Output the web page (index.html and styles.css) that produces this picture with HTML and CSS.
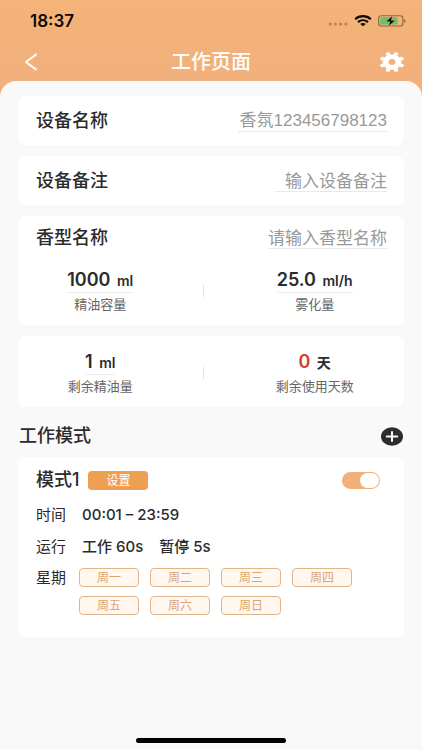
FILE: index.html
```html
<!DOCTYPE html>
<html lang="zh-CN">
<head>
<meta charset="utf-8">
<meta name="viewport" content="width=device-width, initial-scale=1">
<title>工作页面</title>
<link rel="stylesheet" href="styles.css">
</head>
<body>
<div class="app">
  <header class="header">
    <div class="status">
      <span class="clock">18:37</span>
      <div class="status-icons">
        <svg class="dots" viewBox="0 0 20 4" aria-hidden="true"><circle cx="2.2" cy="2" r="1.6"/><circle cx="7.4" cy="2" r="1.6"/><circle cx="12.6" cy="2" r="1.6"/><circle cx="17.8" cy="2" r="1.6"/></svg>
        <svg class="wifi" viewBox="0 0 18 12" aria-hidden="true"><path d="M1.2 4.2C5.600 0.200 12.400 0.200 16.800 4.200M4 7.100C6.900 4.600 11.100 4.600 14 7.100" fill="none" stroke="#0b0805" stroke-width="2.200"/><path d="M9 11.200L6.200 8.900C7.800 7.600 10.200 7.600 11.800 8.900Z" fill="#0b0805"/></svg>
        <svg class="battery" viewBox="0 0 28 12" aria-hidden="true"><rect x="0.600" y="0.800" width="24.300" height="10.200" rx="2.800" fill="none" stroke="#8e6442" stroke-width="1.100"/><rect x="2.200" y="2.300" width="17.500" height="7.200" rx="1.500" fill="#64c466"/><path d="M26 4.200C28 4.600 28 7.200 26 7.600Z" fill="#8e6442"/><path d="M14.600 0.500L7.800 6.700H11.800L10.300 11.600L17.400 5.200H13.300Z" fill="#0b0805" stroke="#f3b27a" stroke-width="0.500"/></svg>
      </div>
    </div>
    <nav class="nav">
      <button class="icon-button" type="button" aria-label="返回">
        <svg class="back" viewBox="0 0 13 18" aria-hidden="true"><path d="M11.500 1.500L1.500 9L11.500 16.500" fill="none" stroke="#fff" stroke-width="2" stroke-linecap="round" stroke-linejoin="round"/></svg>
      </button>
      <h1 class="title">工作页面</h1>
      <button class="icon-button" type="button" aria-label="设置">
        <svg class="gear" viewBox="-10 -10 20 20" preserveAspectRatio="none" aria-hidden="true"><circle r="5.300" fill="none" stroke="#fff" stroke-width="4.800"/><g fill="#fff"><circle cx="3.300" cy="7.900" r="1.900"/><circle cx="-3.300" cy="7.900" r="1.900"/><circle cx="3.300" cy="-7.900" r="1.900"/><circle cx="-3.300" cy="-7.900" r="1.900"/><circle cx="7.900" cy="3.300" r="1.900"/><circle cx="-7.900" cy="3.300" r="1.900"/><circle cx="7.900" cy="-3.300" r="1.900"/><circle cx="-7.900" cy="-3.300" r="1.900"/></g></svg>
      </button>
    </nav>
  </header>

  <main class="sheet">
    <section class="card">
      <div class="field">
        <label for="device-name">设备名称</label>
        <input id="device-name" class="wide" type="text" value="香氛123456798123">
      </div>
    </section>

    <section class="card">
      <div class="field">
        <label for="device-note">设备备注</label>
        <input id="device-note" type="text" placeholder="输入设备备注">
      </div>
    </section>

    <section class="card">
      <div class="field compact">
        <label for="scent-name">香型名称</label>
        <input id="scent-name" class="medium" type="text" placeholder="请输入香型名称">
      </div>
      <div class="metrics">
        <div class="metric">
          <p class="amount lined">1000 <span class="unit">ml</span></p>
          <p class="caption">精油容量</p>
        </div>
        <span class="divider"></span>
        <div class="metric">
          <p class="amount lined">25.0 <span class="unit">ml/h</span></p>
          <p class="caption">雾化量</p>
        </div>
      </div>
    </section>

    <section class="card">
      <div class="metrics alone">
        <div class="metric">
          <p class="amount lined">1 <span class="unit">ml</span></p>
          <p class="caption">剩余精油量</p>
        </div>
        <span class="divider"></span>
        <div class="metric">
          <p class="amount"><span class="alert">0</span> <span class="unit">天</span></p>
          <p class="caption">剩余使用天数</p>
        </div>
      </div>
    </section>

    <div class="section-head">
      <h2>工作模式</h2>
      <button class="icon-button" type="button" aria-label="添加模式">
        <svg class="plus" viewBox="0 0 22 19" aria-hidden="true"><ellipse cx="11" cy="9.500" rx="11" ry="9.300" fill="#2d2d2f"/><path d="M11 5V14M5.800 9.500H16.200" stroke="#fff" stroke-width="2" stroke-linecap="round"/></svg>
      </button>
    </div>

    <section class="card mode">
      <div class="mode-head">
        <h3>模式1</h3>
        <button class="edit" type="button">设置</button>
        <input class="toggle" type="checkbox" role="switch" aria-label="启用模式1" checked>
      </div>
      <div class="row">
        <span class="row-label">时间</span>
        <span class="row-value">00:01 – 23:59</span>
      </div>
      <div class="row">
        <span class="row-label">运行</span>
        <span class="row-value">工作 60s</span>
        <span class="row-value">暂停 5s</span>
      </div>
      <div class="row days-row">
        <span class="row-label">星期</span>
        <div class="days">
          <button type="button">周一</button>
          <button type="button">周二</button>
          <button type="button">周三</button>
          <button type="button">周四</button>
          <button type="button">周五</button>
          <button type="button">周六</button>
          <button type="button">周日</button>
        </div>
      </div>
    </section>
  </main>

  <div class="home-bar"></div>
</div>
</body>
</html>
```
FILE: styles.css
```css
* {
  box-sizing: border-box;
}

body {
  margin: 0;
  background: #f8f8f8;
  color: #2b2b2b;
  font-family: Inter, "Noto Sans CJK SC", sans-serif;
}

h1, h2, h3, p {
  margin: 0;
}

button, input {
  font-family: inherit;
  color: inherit;
}

button {
  padding: 0;
  border: 0;
  background: none;
  cursor: pointer;
}

svg {
  display: block;
}

.app {
  display: flex;
  flex-direction: column;
  min-height: 100vh;
}

.header {
  padding-bottom: 16px;
  background: linear-gradient(#f4b377, #f1b07d);
}

.status {
  display: flex;
  align-items: center;
  justify-content: space-between;
  height: 42px;
  padding: 0 16px 0 30px;
}

.clock {
  color: #0b0805;
  font-size: 17px;
  font-weight: 600;
}

.status-icons {
  display: flex;
  align-items: center;
  gap: 6px;
}

.dots {
  width: 20px;
  height: 4px;
  margin-top: 6px;
  fill: #b9845a;
}

.wifi {
  width: 18px;
  height: 12px;
}

.battery {
  width: 28px;
  height: 12px;
}

.nav {
  display: grid;
  grid-template-columns: 24px 1fr 24px;
  align-items: center;
  height: 39px;
  padding: 0 18px;
}

.title {
  color: #fff;
  font-size: 20px;
  font-weight: 500;
  line-height: 28px;
  text-align: center;
}

.back {
  width: 14px;
  height: 18px;
  margin-left: 6px;
}

.gear {
  width: 24px;
  height: 20px;
}

.sheet {
  display: flex;
  flex-direction: column;
  gap: 11px;
  margin-top: -16px;
  padding: 15px 18px;
  border-radius: 16px 16px 0 0;
  background: #f9f9f9;
}

.card {
  border-radius: 8px;
  background: #fff;
}

.field {
  display: flex;
  align-items: center;
  justify-content: space-between;
  height: 49px;
  padding: 0 17px 0 18px;
}

.field.compact {
  height: 44px;
}

.field label,
.section-head h2 {
  font-size: 18px;
  font-weight: 500;
  line-height: 24px;
}

.field input {
  width: 112px;
  height: 22px;
  padding: 0 0 3px;
  border: 0;
  border-bottom: 1px solid #e8e8e8;
  outline: 0;
  background: none;
  color: #999;
  font-family: "Liberation Sans", "Noto Sans CJK SC", sans-serif;
  font-size: 17px;
  text-align: right;
}

.field input:placeholder-shown {
  padding: 3px 0 0;
}

.field input.medium {
  width: 119px;
}

.field input.wide {
  width: 149px;
}

.field input::placeholder {
  color: #999;
}

.metrics {
  display: grid;
  grid-template-columns: 23fr 6fr 25fr;
  align-items: center;
  padding: 8px 0 11px;
}

.metrics.alone {
  padding-top: 14px;
}

.metric {
  display: flex;
  flex-direction: column;
  align-items: center;
  gap: 1px;
}

.amount {
  height: 25px;
  border-bottom: 1px solid transparent;
  font-size: 18px;
  font-weight: 600;
  line-height: 24px;
}

.amount.lined {
  border-color: #ebebeb;
}

.unit {
  margin-left: 2px;
  font-size: 14px;
}

.alert {
  color: #d93a2b;
}

.caption {
  color: #666;
  font-size: 13px;
  line-height: 20px;
}

.divider {
  justify-self: center;
  width: 1px;
  height: 12px;
  background: #e2e2e2;
}

.section-head {
  display: flex;
  align-items: center;
  justify-content: space-between;
  height: 28px;
  padding: 0 1px;
  margin: 4px 0 -4px;
}

.plus {
  width: 22px;
  height: 19px;
}

.mode {
  display: flex;
  flex-direction: column;
  gap: 8px;
  padding: 11px 24px 22px 18px;
}

.mode-head {
  display: flex;
  align-items: center;
  height: 24px;
  margin-bottom: 3px;
}

.mode-head h3 {
  font-size: 18px;
  font-weight: 500;
  line-height: 24px;
}

.edit {
  width: 60px;
  height: 19px;
  margin-left: 9px;
  border-radius: 4px;
  background: #ee9f51;
  color: #fff;
  font-size: 12px;
  line-height: 19px;
}

.toggle {
  appearance: none;
  display: flex;
  width: 38px;
  height: 17px;
  margin: 0 0 0 auto;
  padding: 1px;
  border-radius: 9px;
  background: #f2b17b;
  cursor: pointer;
}

.toggle::before {
  content: "";
  width: 19px;
  height: 15px;
  border-radius: 8px;
  background: #fff;
}

.toggle:checked::before {
  margin-left: auto;
}

.row {
  display: flex;
  gap: 16px;
  font-size: 15px;
  line-height: 24px;
}

.row-label {
  flex: none;
}

.row-value {
  font-weight: 500;
}

.days-row {
  gap: 13px;
  margin-top: 1px;
  line-height: 20px;
}

.days {
  display: flex;
  flex-wrap: wrap;
  gap: 9px 11px;
}

.days button {
  width: 60px;
  height: 19px;
  border: 1px solid #e2b587;
  border-radius: 4px;
  background: #fff7f0;
  color: #d9a576;
  font-size: 12px;
  line-height: 17px;
}

.home-bar {
  width: 150px;
  height: 5px;
  margin: auto auto 7px;
  border-radius: 3px;
  background: #000;
}
```
